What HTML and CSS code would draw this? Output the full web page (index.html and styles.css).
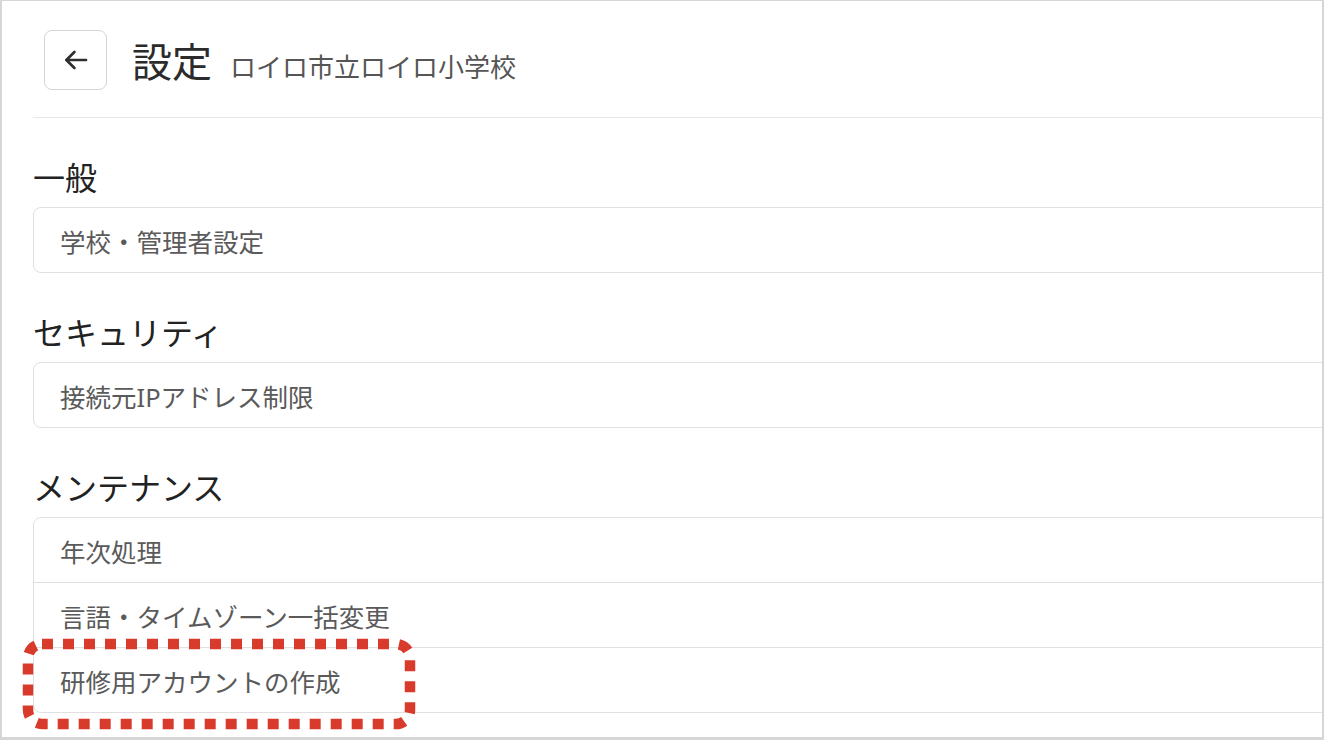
FILE: index.html
```html
<!DOCTYPE html>
<html lang="ja">
<head>
<meta charset="utf-8">
<title>設定</title>
<link rel="stylesheet" href="styles.css">
</head>
<body>
<div class="frame">
  <div class="content">
    <header class="header">
      <button class="back" type="button" aria-label="戻る">
        <svg width="24" height="20" viewBox="0 0 24 20" fill="none" stroke="#2e2e2e" stroke-width="2.7" stroke-linecap="round" stroke-linejoin="round"><path d="M22 10H2.6"/><path d="M10.4 2L2.4 10l8 8"/></svg>
      </button>
      <div class="titles">
        <h1 class="title">設定</h1>
        <span class="subtitle">ロイロ市立ロイロ小学校</span>
      </div>
    </header>

    <section class="section">
      <h2 class="heading">一般</h2>
      <div class="card">
        <div class="row">学校・管理者設定</div>
      </div>
    </section>

    <section class="section">
      <h2 class="heading">セキュリティ</h2>
      <div class="card">
        <div class="row">接続元IPアドレス制限</div>
      </div>
    </section>

    <section class="section">
      <h2 class="heading">メンテナンス</h2>
      <div class="card">
        <div class="row">年次処理</div>
        <div class="row">言語・タイムゾーン一括変更</div>
        <div class="row">研修用アカウントの作成</div>
      </div>
    </section>
  </div>

  <svg class="highlight" width="400" height="96" viewBox="0 0 400 96">
    <rect x="7" y="8" width="382" height="80" rx="14" ry="14" fill="none" stroke="#d83b2b" stroke-width="10.5" stroke-dasharray="11 10"/>
  </svg>
</div>
</body>
</html>
```
FILE: styles.css
```css
* { box-sizing: border-box; }

html, body {
  margin: 0;
  padding: 0;
  background: #ffffff;
}

body {
  font-family: "Noto Sans", "Noto Sans CJK JP", sans-serif;
  color: #222;
}

.frame {
  position: relative;
  width: 1324px;
  height: 740px;
  overflow: hidden;
  border: 2px solid #d6d6d6;
  border-top-width: 1px;
  border-bottom-width: 3px;
  background: #fff;
}

.content {
  padding-left: 31px;
  width: 1420px;
}

.header {
  display: flex;
  align-items: center;
  gap: 25px;
  padding: 29px 0 27px 11px;
  border-bottom: 1px solid #e8e8e8;
}

.back {
  width: 63px;
  height: 60px;
  display: flex;
  align-items: center;
  justify-content: center;
  border: 1px solid #d4d4d4;
  border-radius: 8px;
  background: #fff;
  padding: 0;
  margin: 0;
}

.titles {
  display: flex;
  align-items: baseline;
  gap: 18px;
  padding-top: 4px;
}

.title {
  margin: 0;
  font-size: 40px;
  font-weight: 400;
  line-height: 1.2;
  color: #2b2b2b;
}

.subtitle {
  font-size: 26px;
  color: #555;
  line-height: 1.2;
}

.heading {
  margin: 40px 0 9px;
  font-size: 32px;
  font-weight: 400;
  line-height: 40px;
  color: #222;
}

.card {
  border: 1px solid #e0e0e0;
  border-radius: 8px;
  background: #fff;
}

.row {
  height: 64px;
  display: flex;
  align-items: center;
  padding-left: 26px;
  font-size: 25.5px;
  color: #5a5a5a;
}

.row + .row {
  border-top: 1px solid #e0e0e0;
  height: 65px;
}

.highlight {
  position: absolute;
  left: 19px;
  top: 635px;
}
```
